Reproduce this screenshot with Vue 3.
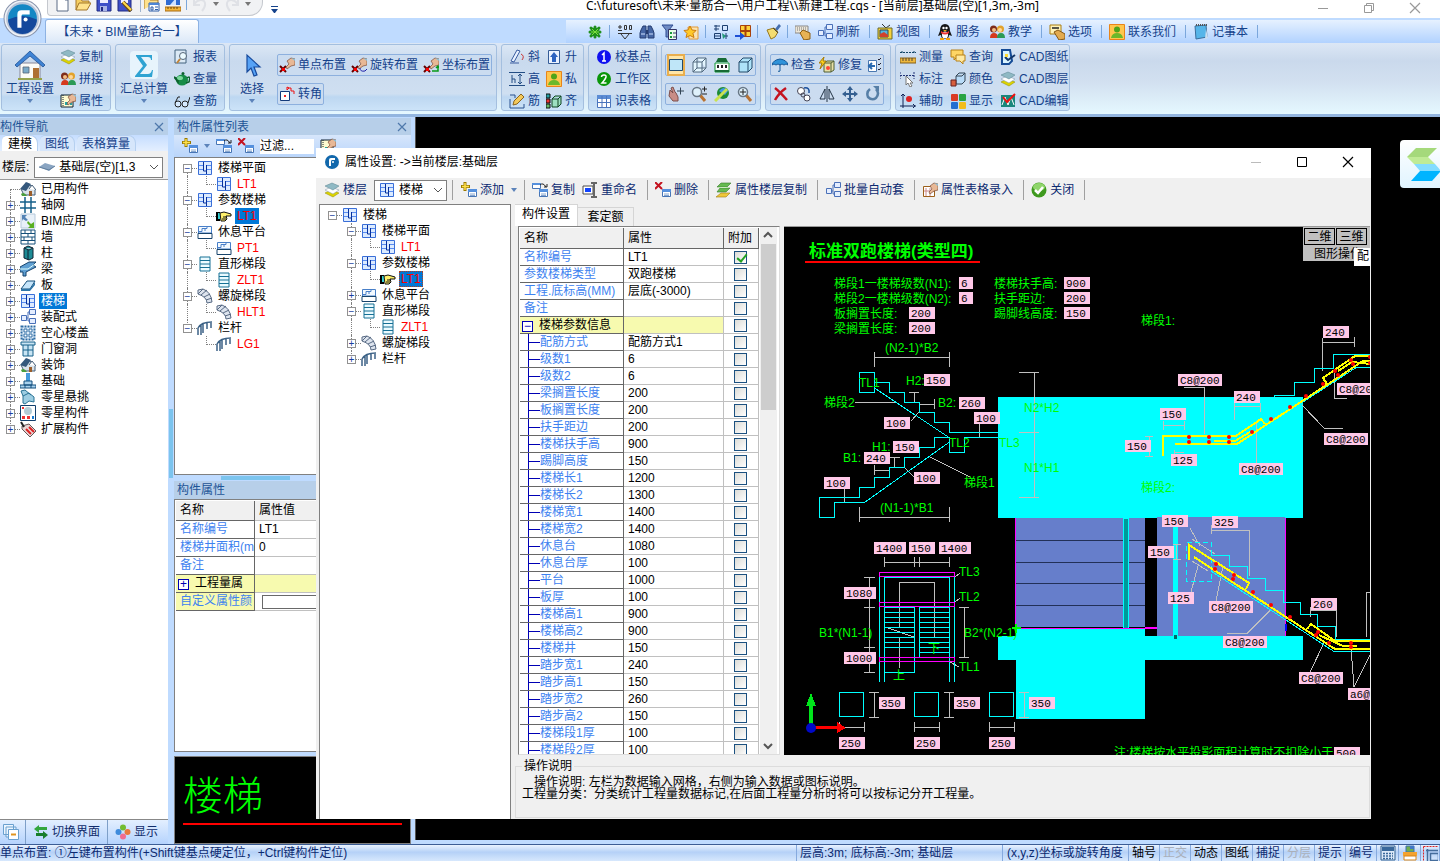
<template>
  <div class="app">
    <header class="titlebar">
      <div class="quick">
        <button v-for="q in quickIcons" :key="q" class="bare" :class="{ split: q === 'folderTable' }" :aria-label="q"><Icon :name="q" /></button>
        <i class="divider"></i>
        <button class="bare" aria-label="撤销"><Icon name="undo" /></button>
        <i class="caret grey"></i>
        <button class="bare" aria-label="恢复"><Icon name="redo" /></button>
        <i class="caret grey"></i>
      </div>
      <i class="more"></i>
      <h1>C:\futuresoft\未来·量筋合一\用户工程\\新建工程.cqs - [当前层]基础层(空)[1,3m,-3m]</h1>
      <div class="window-buttons">
        <button class="bare" aria-label="最小化"><Icon name="winMin" /></button>
        <button class="bare" aria-label="还原"><Icon name="winRestore" /></button>
        <button class="bare" aria-label="关闭"><Icon name="winClose" /></button>
      </div>
    </header>
    <button class="bare orb" aria-label="菜单">
      <svg viewBox="0 0 38 38"><circle cx="19" cy="19" r="18" fill="#eef1f6" stroke="#8793ac" /><circle cx="19" cy="19" r="15" fill="#1587c4" stroke="#b7c3d8" stroke-width="2" /><path d="M5 20a14 14 0 0 0 28 0q-14-7-28 0" fill="#14489c" /><path d="M14 28V15q0-4 4-4h8v4h-7q-1 0-1 2v11z" fill="#fff" /><circle cx="22" cy="20" r="2" fill="#fff" /></svg>
    </button>

    <div class="tabrow">
      <button class="bare ribbon-tab">【未来・BIM量筋合一】</button>
      <nav class="tools">
        <template v-for="(t, i) in topTools" :key="i">
          <i v-if="t === '|'" class="divider"></i>
          <button v-else class="bare tool" :class="{ labelled: t[1] }" :aria-label="t[0]"><Icon :name="t[0]" /><span v-if="t[1]">{{ t[1] }}</span></button>
        </template>
      </nav>
    </div>

    <section class="ribbon">
      <div class="group g-project">
        <button class="bare big"><Icon name="house" class="large" /><span>工程设置</span><i class="caret"></i></button>
        <div class="column"><button v-for="b in projectTools" :key="b[1]" class="bare tool"><Icon :name="b[0]" />{{ b[1] }}</button></div>
      </div>
      <div class="group g-project">
        <button class="bare big"><Icon name="sigma" class="large" /><span>汇总计算</span><i class="caret"></i></button>
        <div class="column"><button v-for="b in sumTools" :key="b[1]" class="bare tool"><Icon :name="b[0]" />{{ b[1] }}</button></div>
      </div>
      <div class="group g-place">
        <button class="bare big"><Icon name="cursor" class="large" /><span>选择</span><i class="caret"></i></button>
        <div class="boxes">
          <div class="box"><button v-for="b in placeTools" :key="b[1]" class="bare tool"><Icon :name="b[0]" />{{ b[1] }}</button></div>
          <div class="box"><button class="bare tool"><Icon name="corner" />转角</button></div>
        </div>
      </div>
      <div class="group g-edit">
        <div v-for="(c, i) in editTools" :key="i" class="column"><button v-for="b in c" :key="b[1]" class="bare tool"><Icon :name="b[0]" />{{ b[1] }}</button></div>
      </div>
      <div class="group g-base">
        <div class="column"><button v-for="b in baseTools" :key="b[1]" class="bare tool"><Icon :name="b[0]" />{{ b[1] }}</button></div>
      </div>
      <div class="group g-view">
        <div class="boxes">
          <div class="box wide"><button v-for="b in viewTools" :key="b" class="bare tool" :class="{ on: b === 'square' }" :aria-label="b"><Icon :name="b" /></button></div>
          <div class="box wide"><button v-for="b in zoomTools" :key="b" class="bare tool" :aria-label="b"><Icon :name="b" /></button></div>
        </div>
      </div>
      <div class="group g-check">
        <div class="boxes">
          <div class="box narrow">
            <button class="bare tool"><Icon name="umbrella" />检查</button>
            <button class="bare tool"><Icon name="repair" />修复</button>
            <button class="bare tool" aria-label="列表"><Icon name="list" /></button>
          </div>
          <div class="box wide"><button v-for="b in modifyTools" :key="b" class="bare tool" :aria-label="b"><Icon :name="b" /></button></div>
        </div>
      </div>
      <div class="group g-cad">
        <div v-for="(c, i) in cadTools" :key="i" class="column"><button v-for="b in c" :key="b[1]" class="bare tool"><Icon :name="b[0]" />{{ b[1] }}</button></div>
      </div>
    </section>

    <main class="workspace">
      <aside class="nav-panel">
        <div class="panel-title">构件导航<button class="bare" aria-label="关闭"><Icon name="x" /></button></div>
        <div class="panel-tabs">
          <button v-for="(t, i) in ['建模', '图纸', '表格算量']" :key="t" class="bare" :class="{ active: i === 0 }">{{ t }}</button>
        </div>
        <div class="floor">
          <label for="floor">楼层:</label>
          <span class="combo"><Icon name="slab" /><select id="floor"><option>基础层(空)[1,3</option></select><Icon name="chevron" /></span>
        </div>
        <ul class="tree nav-tree">
          <li v-for="(n, i) in navTree" :key="n[1]">
            <span class="cell" :class="{ first: i === 0, last: i === navTree.length - 1 }"><button v-if="i" class="expander">+</button></span>
            <Icon :name="n[0]" /><span class="label" :class="{ selected: n[1] === '楼梯' }">{{ n[1] }}</span>
          </li>
        </ul>
        <div class="nav-foot">
          <button class="bare tool" aria-label="折叠"><Icon name="pages" /></button>
          <button class="bare tool"><Icon name="swap" />切换界面</button>
          <button class="bare tool"><Icon name="petals" />显示</button>
        </div>
      </aside>
      <div class="splitter"><i></i></div>
      <aside class="prop-panel">
        <div class="panel-title">构件属性列表<button class="bare" aria-label="关闭"><Icon name="x" /></button></div>
        <div class="prop-tools">
          <button class="bare tool" aria-label="添加"><Icon name="add" /></button><i class="caret"></i>
          <button class="bare tool" aria-label="复制"><Icon name="copy" /></button>
          <button class="bare tool" aria-label="删除"><Icon name="remove" /></button>
          <input type="text" value="过滤..." aria-label="过滤" />
          <button class="bare tool" aria-label="设置"><Icon name="props" /></button>
        </div>
        <ul class="tree list-tree">
          <li v-for="(n, i) in listTree" :key="i">
            <span v-for="(c, j) in n.cells" :key="j" class="cell" :class="c"><button v-if="c.includes('exp')" class="expander">−</button></span>
            <Icon :name="n.icon" /><span class="label" :class="{ leaf: n.leaf, selected: n.on }">{{ n.text }}</span>
          </li>
        </ul>
        <div class="h-splitter"><i></i></div>
        <div class="panel-title sub">构件属性</div>
        <div class="small-grid">
          <table>
            <thead><tr><th>名称</th><th>属性值</th></tr></thead>
            <tbody>
              <tr><td>名称编号</td><td>LT1</td></tr>
              <tr><td>楼梯井面积(m</td><td>0</td></tr>
              <tr><td>备注</td><td></td></tr>
              <tr class="section"><td><button class="toggle">+</button>工程量属</td><td></td></tr>
              <tr class="own"><td>自定义属性颜</td><td><input type="text" aria-label="自定义属性颜色" /></td></tr>
            </tbody>
          </table>
        </div>
        <div class="preview"><span>楼梯</span><i></i></div>
      </aside>
      <div class="viewport"></div>
    </main>

    <footer class="status">
      <span class="hint">单点布置: ①左键布置构件(+Shift键基点硬定位，+Ctrl键构件定位)</span>
      <span class="level">层高:3m; 底标高:-3m; 基础层</span>
      <span class="coords">(x,y,z)坐标或旋转角度</span>
      <button v-for="s in switches" :key="s" class="bare" :class="{ dark: ['轴号', '动态', '图纸'].includes(s), off: ['正交', '分层'].includes(s) }">{{ s }}</button>
      <button v-for="s in ['calculator', 'printer', 'selection']" :key="s" class="bare pic" :aria-label="s"><Icon :name="s" /></button>
    </footer>

    <a href="#" class="float-logo" aria-label="助手">
      <svg viewBox="0 0 40 48"><path d="M16 8h21l-9 9H7z" fill="#a5d97b" /><path d="M7 17h21l7 7H14z" fill="#bfeb95" /><path d="M14 24h21l6 7H20z" fill="#82dcff" /><path d="M20 31h21l-9 10H11z" fill="#00b4ff" /></svg>
    </a>

    <section class="dialog">
      <div class="dialog-title">
        <svg class="dialog-logo" viewBox="0 0 16 16"><circle cx="8" cy="8" r="7" fill="#1268ac" /><path d="M5 12V6q0-2 2-2h4v2H8q-1 0-1 2v4z" fill="#fff" /><circle cx="9" cy="8" r="1" fill="#fff" /></svg>
        <h2>属性设置: -&gt;当前楼层:基础层</h2>
        <button class="bare faint" aria-label="最小化"><Icon name="winMin" /></button>
        <button class="bare" aria-label="最大化"><Icon name="winMax" /></button>
        <button class="bare" aria-label="关闭"><Icon name="winClose" /></button>
      </div>
      <div class="dialog-tools">
        <button class="bare tool"><Icon name="layers" />楼层</button>
        <span class="combo"><Icon name="stair" /><select aria-label="构件"><option>楼梯</option></select><Icon name="chevron" /></span>
        <i class="divider"></i>
        <button class="bare tool"><Icon name="add" />添加</button><i class="caret"></i>
        <i class="divider"></i>
        <button class="bare tool"><Icon name="copy" />复制</button>
        <button class="bare tool"><Icon name="rename" />重命名</button>
        <i class="divider"></i>
        <template v-for="b in dialogTools" :key="b[1]"><button class="bare tool"><Icon :name="b[0]" />{{ b[1] }}</button><i class="divider"></i></template>
      </div>
      <div class="dialog-body">
        <ul class="tree dialog-tree">
          <li v-for="(n, i) in dialogTree" :key="i">
            <span v-for="(c, j) in n.cells" :key="j" class="cell" :class="c"><button v-if="c.includes('exp')" class="expander">{{ n.closed ? '+' : '−' }}</button></span>
            <Icon :name="n.icon" /><span class="label" :class="{ leaf: n.leaf, selected: n.on, focus: n.on }">{{ n.text }}</span>
          </li>
        </ul>
        <div class="editor">
          <div class="editor-tabs"><button class="active">构件设置</button><button>套定额</button></div>
          <div class="editor-main">
            <div class="grid-wrap">
              <div class="grid-clip">
                <table class="grid">
                  <thead><tr><th>名称</th><th>属性</th><th>附加</th></tr></thead>
                  <tbody>
                    <tr v-for="(r, i) in rows" :key="r[0]" :class="{ section: i === 4, child: i > 4 }">
                      <td><button v-if="i === 4" class="toggle">−</button>{{ r[0] }}</td>
                      <td>{{ r[1] }}</td>
                      <td><input type="checkbox" :checked="i === 0" :aria-label="r[0]" /></td>
                    </tr>
                  </tbody>
                </table>
              </div>
              <div class="scrollbar"><Icon name="up" /><i></i><Icon name="down" /></div>
            </div>
            <div class="drawing">
              <svg class="sheet" width="100%" height="100%">
                <g transform="translate(0 -2)">
                  <!-- model faces behind the sections -->
                  <path fill="#0ff" d="M214 172h305v121H214zM214 411h305v24H361v59H232v-59h-18zM232 403h129v9H232z" />
                  <path fill="#667ecb" d="M232 293h129v109H232zM373 292h128v119H373z" />
                  <path stroke="#223058" d="M232 315.5h129M232 337.5h129M232 358.5h129M232 380.5h129" />
                  <path fill="#0ff" d="M339 293h6v111h-6zM389 302h5v109h-5z" />
                  <path fill="#099" d="M340 294h4v110h-4z" />
                  <path fill="#066" d="M390 410h3v4h-3z" />
                  <path class="magenta" d="M231.5 293v110M231 403.5h142M501.5 293v118" />
                  <path class="magenta" d="M361 402.5h12" />
                  <path fill="#00f" d="M501 399h2v7h-2z" />
                  <path fill="none" stroke="#0f0" stroke-width="2" d="M232 399v9M228 403h9" />
                  <path stroke="red" stroke-width="2" d="M21 37h175" />

                  <path class="grey" d="M90.5 132.5h75M90.5 127v15M165.5 127v15M71 177.5h40M125 167.5h10M130.5 167v10M136 179.5h15M150.5 174v10M127 196l8-9M195.5 198v14M90.5 240v10M90 245.5h15M106 232.5h10M110.5 232v10M120 242l10 10M146 232l40 20M60.5 262v15M75.5 292.5h90M75.5 282v15M165.5 282v15M250.5 147v125M235 147.5h20M235 207.5h20M235 272.5h20" />
                  <path class="cyan" d="M75.5 147.5h15v20h-15zM90.5 157.5h15v10h15v10h15v10h15v10h15v10h48M90.5 163L165 212.5M35.5 292.5v-20h40v-10h15v-10h15v-10h15v-10h15v-10h15v-10h15M35.5 292.5h15v-15h30L165.5 217M165.5 212v15h15v-15h33" />

                  <path class="grey" d="M100.5 337.5h65M100.5 332v10M130.5 332v10M135.5 332v10M165.5 332v10M115.5 402v-45h35v55M115.5 413v30M101 402l29 10M85.5 352v95M80 352.5h11M80 382.5h11M80 422.5h11M80 447.5h11M180.5 382v50M175 382.5h10M175 432.5h10M171 352l5-4M171 377l5-4M166 437l9 5" />
                  <path class="cyan" d="M95.5 347v110M100.5 352v105M165.5 352v105M170.5 347v110M100 352.5h65M130.5 382v65h-30M135.5 382v50" />
                  <path class="cyan" d="M101 382.5h30M101 387.5h30M101 392.5h30M101 397.5h30M101 402.5h30M101 407.5h30M101 412.5h30M101 417.5h30M101 422.5h30M136 382.5h30M136 387.5h30M136 392.5h30M136 397.5h30M136 402.5h30M136 407.5h30M136 412.5h30M136 417.5h30M136 422.5h30M136 427.5h30" />
                  <path class="magenta" d="M95.5 347.5h75v4h-75zM95.5 377.5h75v4h-75zM95.5 432.5h75v4h-75z" />
                  <g v-for="x in [0, 75, 150]" :key="x" :transform="`translate(${x} 0)`">
                    <path class="cyan" d="M55.5 467.5h24v24h-24z" />
                    <path class="grey" d="M90.5 467v25M85 467.5h10M85 492.5h10M55.5 502.5h25M55.5 497v10M80.5 497v10" />
                  </g>
                  <path fill="#00e51b" d="M25 503v-22h-3l5-13 5 13h-3v22z" />
                  <path fill="red" d="M27 501h26v-4l9 6-9 5v-4H27z" />
                  <circle cx="27" cy="503" r="5" fill="#0008c8" />

                  <path class="grey" d="M538.5 113v33M538.5 117.5h32M570.5 112v10M400 162.5h20.5v46M450 181.5h27M450.5 178v17M476.5 178v9M379.5 200.5h21M379.5 196v9M400.5 196v9M365.5 211v20M361 211.5h8M361 231.5h8M390.5 225v6M390 227.5h10M472.5 197v41M550.5 148v25h12M518 180l22 23h19" />
                  <path class="cyan" d="M490.5 172v-1.5h20v-13h20v-14h19v-14h38M519 177l54-35h14" />
                  <path class="rebar" d="M379 231v-20h73l25-17 4 5M391 219h62l126-83h8M430 216h21l15-9M543 159l-4-6 32-22h16M554 146l14-9 19 2" />
                  <circle v-for="(d, i) in dots" :key="i" :cx="d[0]" :cy="d[1]" r="2" fill="red" />

                  <path class="grey" d="M406 303l10 18M408 314l23 15M427.5 300v9M427 305.5h38v45M392.5 319v16M389 319.5h8M389 334.5h8M408 336l16 10M407 367l7-26M432 376l7-35M443 408.5h20l23-23M526.5 382v10M526 385.5h26M552.5 382v30M526 447l15-31M570 462l-3-39M570 462l17-34M582.5 412v-45h5" />
                  <path class="cyan" d="M427 330.5h18.500v11h18v12h18v12h18v12h17v12h17v12h18v13h35M427 346l123 80.500h37" />
                  <path class="cyan" stroke-dasharray="5 3" d="M402.500 317.500h25v39h-25z" />
                  <path class="rebar" d="M405 335v-15l60 38-3 6M410 332l141 92h36M523 404l4-5 24 17h36M535 410l24 11h14" />
                  <circle v-for="(d, i) in dots2" :key="i" :cx="d[0]" :cy="d[1]" r="2" fill="red" />

                  <text class="heading" x="25" y="32">标准双跑楼梯(类型四)</text>
                  <text v-for="(t, i) in notes" :key="i" class="note" :x="t[0]" :y="t[1]">{{ t[2] }}</text>
                  <g v-for="(p, i) in sizes" :key="i">
                    <rect :x="p[0]" :y="p[1]" :width="p[2].length > 4 ? 44 : p[2].length * 6 + 8" height="12" fill="#ffc8e8" />
                    <text class="size" :x="p[0] + 2" :y="p[1] + 10">{{ p[2] }}</text>
                  </g>
                </g>
              </svg>
              <div class="view-switch"><button>二维</button><button>三维</button><span>图形操作</span></div>
              <div class="popup">配</div>
            </div>
          </div>
          <fieldset>
            <legend>操作说明</legend>
            <p>　操作说明: 左栏为数据输入网格，右侧为输入数据或图标说明。</p>
            <p>工程量分类：分类统计工程量数据标记,在后面工程量分析时将可以按标记分开工程量。</p>
          </fieldset>
        </div>
      </div>
    </section>
  </div>
</template>

<script setup>
import { h } from 'vue';

const hand = '<path d="M8 4l4-3 4 1v6l-4 1-4 3-1-2 3-3z" fill="#e8b896" stroke="#7b4a35" stroke-width=".7"/><path d="M12 1l4 1v2z" fill="#8ac0d8"/>';
const redX = '<path d="M1 9l6 6M7 9l-6 6" stroke="#600" stroke-width="2"/><path d="M3 11h3v3H3z" fill="red"/>';
const miniTable = '<path d="M7.500 7.500h8v7h-8z" fill="#fff" stroke="#4775b5"/><path d="M7 7h9v3H7z" fill="#5590dd"/><path d="M9 12h5M9 13.500h5" stroke="#88a7d0"/>';
const sheets = '<path d="M1 11l6-3 8 3-6 4z" fill="#ddd400" stroke="#8f8b00" stroke-width=".5"/><path d="M1 8l6-3 8 3-6 4z" fill="#fff" stroke="#7d93a8" stroke-width=".5"/><path d="M1 4l7-3 7 3-6 4z" fill="#8fb9c4" stroke="#56808d" stroke-width=".5"/>';
const magnifier = '<path d="M9 9l5 6" stroke="#b87333" stroke-width="3"/><circle cx="6" cy="6" r="4.500" fill="#dff1fb" stroke="#687786" stroke-width="1.500"/>';
const people = '<circle cx="4.500" cy="5" r="3.500" fill="#7e2c1b"/><path d="M1 14q0-5 4-5t4 5z" fill="#d63a1e"/><circle cx="5" cy="6" r="2" fill="#f4bd83"/><circle cx="11.500" cy="5" r="3.500" fill="#e2a22c"/><path d="M8 14q0-5 4-5t4 5z" fill="#2b9a56"/><circle cx="11" cy="6" r="2" fill="#ffd79a"/>';
const stair = '<path d="M1.500 1.500h13v13h-13z" fill="#dcebff" stroke="#3a6fd8"/><path d="M2 5.500h4M2 9.500h4M10 5.500h4M10 9.500h4" stroke="#5b8df0"/><path d="M6.500 2v9h3V5M9.500 5v9" stroke="#06309c" fill="none"/>';
const home = '<path d="M1 8l6-6 8 6v6H4z" fill="#d9e2ea" stroke="#445e78"/><path d="M0 8l6-7 5 2-5 7z" fill="#34587c"/><path d="M9 8l3-4 4 5" fill="#fff" stroke="#445e78"/><path d="M9 10h3v5H9z" fill="#9a5d2a"/><path d="M1 13q3-3 6 2H2z" fill="#4a9e3d"/>';
const contact = '<path d="M.500.500h15v15H.500z" fill="#ffc64d" stroke="#e8841a"/><circle cx="8" cy="5.500" r="3" fill="#4fa419"/><path d="M2 14q1-5 6-5t6 5z" fill="#6cb82a"/>';
const cube = '<path d="M2 5l4-4h9v10l-4 4H2z" fill="#aee2f8" stroke="#234a6a"/><path d="M2 5h9l4-4M11 5v10" stroke="#234a6a" fill="none"/>';
const arrowCursor = '<path d="M6 5l7 7h-3l2 3-2 1-2-4-2 2z" fill="#fff" stroke="#777"/>';

const icons = {
  newFile: '<path d="M3 1h8l3 3v11H3z" fill="#fff" stroke="#5a6b85"/><path d="M11 1v3h3" fill="#cfdced" stroke="#5a6b85"/>',
  open: '<path d="M1 14V3h5l1 2h7v3" fill="#f6cf62" stroke="#a3762a"/><path d="M1 14l3-7h12l-4 7z" fill="#ffe28c" stroke="#a3762a"/><path d="M9 1q4-1 5 3" fill="none" stroke="#3b75b4"/>',
  save: '<path d="M1 1h13l1 1v13H1z" fill="#3e50c8" stroke="#202a82"/><path d="M4 1h8v6H4z" fill="#eef"/><path d="M4 10h7v5H4z" fill="#aab4e6"/><path d="M5 11h2v4H5z" fill="#202a82"/>',
  saveEdit: '<path d="M1 1h12l1 1v13H1z" fill="#3e50c8" stroke="#202a82"/><path d="M4 1h7v6H4z" fill="#eef"/><path d="M6 6l8 9" stroke="#6b4b14" stroke-width="4"/><path d="M6 6l8 8" stroke="#ffd84d" stroke-width="2"/>',
  folderTable: '<path d="M0 13V2h5l1 2h8v3" fill="#ffe28c" stroke="#a3762a"/><path d="M5 7h10v8H5z" fill="#fff" stroke="#2c5da8"/><path d="M5 7h10v2H5z" fill="#4d86d6"/><path d="M7 11h2v3H7zM11 11h3M11 13.500h3" stroke="#2c5da8" fill="none"/>',
  ruler: '<path d="M1 1h14v8H1z" fill="#2f6bd2"/><path d="M5 9l6-7v7z" fill="#cfe2ff"/><path d="M0 11h16v4H0z" fill="#f3b63a" stroke="#a86a10"/><path d="M3 11v2M6 11v2M9 11v2M12 11v2" stroke="#704608"/>',
  undo: '<path d="M2 3v6h6M2 8q5-6 10-3 3 4-2 10" fill="none" stroke="#dfe1e6" stroke-width="2"/>',
  redo: '<path d="M14 3v6H8M14 8Q9 2 4 5q-3 4 2 10" fill="none" stroke="#dfe1e6" stroke-width="2"/>',
  winMin: '<path d="M3 8.500h10" stroke="currentColor"/>',
  winRestore: '<path d="M3.500 5.500h7v7h-7zM5.500 5V3.500h7v7H11" fill="none" stroke="currentColor"/>',
  winMax: '<path d="M3.500 3.500h9v9h-9z" fill="none" stroke="currentColor"/>',
  winClose: '<path d="M3 3l10 10M13 3L3 13" fill="none" stroke="currentColor" stroke-width="1.200"/>',
  x: '<path d="M4 4l8 8M12 4l-8 8" stroke="#4f78ab" stroke-width="1.200"/>',
  chevron: '<path d="M4 6l4 4 4-4" fill="none" stroke="#555"/>',
  up: '<path d="M4 10l4-4 4 4" fill="none" stroke="#555" stroke-width="2"/>',
  down: '<path d="M4 6l4 4 4-4" fill="none" stroke="#555" stroke-width="2"/>',
  clover: '<path d="M4 4l8 8M12 4l-8 8M8 3v10M3 8h10" stroke="#1f8f1c" stroke-width="3" stroke-linecap="round"/><path d="M5 5l6 6M11 5l-6 6M4 8h8" stroke="#7ee040"/>',
  level: '<path d="M1 3h4M3 1v4M1 6.500h4M7.500 1.500h2v4h-2zM12.500 1.500h2v4h-2zM1 9.500h14M4 10l4 5 4-5" fill="none" stroke="#333"/>',
  binoculars: '<path d="M2 6l2-4h3v12H1V9zM9 2h3l2 4 1 3v5H9z" fill="#4566a5" stroke="#263d70"/><path d="M7 6h2v4H7z" fill="#263d70"/><path d="M2 10h4M10 10h4" stroke="#cfe0ff"/>',
  filter: '<path d="M1 1h11L8 6v7H5V6z" fill="#6f8bc4" stroke="#2d4b91"/><path d="M7.500 5.500h8v10h-8z" fill="#e8ffe8" stroke="#336"/><path d="M9 8h2v2H9zM9 12h2v2H9z" fill="#1a9a3a"/><path d="M12 9h3M12 13h3" stroke="#336"/>',
  star: '<path d="M5 3h10v12H6z" fill="#fbe3b0" stroke="#e09a3a"/><path d="M7 2l2 4 4 .500-3 3 1 4-4-2-4 2 1-4-3-3 4-.500z" fill="#ffc928" stroke="#cc7b0d"/>',
  windows: '<path d="M1 2h6M1 5h5M3 1v6M9.500 1.500h5v5h-5zM1.500 9.500h6v5h-6zM1 12h6M10 12h5M13 9v6" stroke="#1c3f70" fill="none"/><path d="M9 9l4 3-3 3z" fill="#297"/>',
  grid4: '<path d="M5.500 1.500h10v11h-10z" fill="#ffd33b" stroke="#a8420c"/><path d="M10.500 1v12M5 7h10" stroke="#a8420c" stroke-width="2"/><path d="M0 11h5V8l5 4-5 4v-3H0z" fill="#1d4fd6"/>',
  brush: '<path d="M10 5l4-5 2 2-4 5z" fill="#466fae"/><path d="M2 6l7-2 4 4-3 5-4 2z" fill="#f4dc71" stroke="#99781c"/><path d="M8 4l5 5" stroke="#444"/>',
  keyboard: '<path d="M0 2h13v7H0z" fill="#ece6d8" stroke="#888"/><path d="M2 4h9M2 6h9" stroke="#777" stroke-dasharray="1 1"/><path d="M5 9l3-3 7 3v6l-6 1z" fill="#e8b254" stroke="#8e5e12"/>',
  net: '<path d="M1.500 6.500h5v5h-5z" fill="#e5eeff" stroke="#4a70b8"/><path d="M9.500.500h6v5h-6zM9.500 9.500h6v5h-6z" fill="#e5eeff" stroke="#4a70b8"/><path d="M6 9h2V3h1M8 9v3h1" stroke="#4a70b8" fill="none"/>',
  tv: '<path d="M5 0l4 4 4-3" stroke="#333" fill="none"/><path d="M1 4h14v11H1z" fill="#f5d23c" stroke="#6a6a2a"/><path d="M3 6h8v7H3z" fill="#55b5dd" stroke="#345"/><path d="M3 10l4-2 4 3v2H3z" fill="#d0402b"/>',
  penguin: '<path d="M3 7q0-7 5-7t5 7l2 5-3-1q0 4-4 4t-4-4l-3 1z" fill="#181818"/><ellipse cx="8" cy="11" rx="3" ry="3.500" fill="#fff"/><path d="M4 7q4 3 8 0v2q-4 3-8 0z" fill="#e33"/><circle cx="6.500" cy="4" r="1.200" fill="#fff"/><circle cx="9.500" cy="4" r="1.200" fill="#fff"/><path d="M6 6h4l-2 1.500z" fill="#f9b20d"/><path d="M3 14h4v2H3zM9 14h4v2H9z" fill="#f5a30b"/>',
  people,
  option: '<path d="M1 1h11v9H1z" fill="#fff3b8" stroke="#a97d11"/><path d="M3 4h7" stroke="#222" stroke-width="1.500"/><path d="M5 8l4-2 7 4v5l-6 1z" fill="#e3ab50" stroke="#845512"/>',
  contact,
  notebook: '<path d="M2 2l11-1 1 12-11 2z" fill="#56b5e9" stroke="#3a6e9c"/><path d="M3 1h11" stroke="#555" stroke-dasharray="1 1" stroke-width="2"/><path d="M13 5l2 9-3 1" fill="#cde"/>',
  house: '<path d="M3 7h10v8H3z" fill="#fbfbf6" stroke="#889" stroke-width=".5"/><path d="M8 1L.500 8l1 1L8 3.500 14.500 9l1-1z" fill="#3f83d4" stroke="#1f5193" stroke-width=".4"/><path d="M9.500 9.500h3V15h-3z" fill="#ae7033"/><path d="M4.500 9h3v3h-3z" fill="#7aaac8" stroke="#567" stroke-width=".4"/><path d="M2 15h12" stroke="#96a34c"/>',
  sigma: '<rect x="1" y="1" width="14" height="14" rx="2" fill="#e7f4fc"/><path d="M4 3h8v2.500h-.5Q11.500 4 10 4H6.500L9.500 8 6 12.500h4q1.500 0 2-2h.500L12 14H3.500v-.5L7.500 8.500 4 3.500z" fill="#2fa3d2"/>',
  cursor: '<path d="M5.500 3v8.500l2-2 1.500 4 1.500-.500-1.500-4h3z" fill="#56a2f6" stroke="#174a9c" stroke-width=".6"/>',
  layers: sheets,
  props: '<path d="M1 2h12v12H1z" fill="#fffbd0" stroke="#123"/><path d="M3 2v12" stroke="#123" stroke-dasharray="1 1"/><path d="M5 9h3v3H5zM10 10h2v2h-2z" fill="#26a4a4"/>' + hand,
  report: '<path d="M1 1h11v13H1z" fill="#dbe9f5" stroke="#43627e"/><circle cx="9" cy="7" r="3.500" fill="#ecfbff" stroke="#567"/><path d="M6 10l-3 4" stroke="#c28338" stroke-width="2"/>',
  teapot: '<ellipse cx="8" cy="9" rx="6" ry="5.500" fill="#168c47"/><path d="M0 6l4 2v3zM13 7q4-3 2 4l-3 1" fill="none" stroke="#0c602e" stroke-width="1.500"/><circle cx="9" cy="2.500" r="1.500" fill="#0c602e"/><ellipse cx="6" cy="7" rx="3" ry="2" fill="#7bd99b"/>',
  glasses: '<circle cx="4" cy="11" r="3" fill="#d7ebff" stroke="#222"/><circle cx="11" cy="11" r="3" fill="#d7ebff" stroke="#222"/><path d="M1 10l3-6h2M14 10l2-6" stroke="#222" fill="none"/>',
  placePoint: redX + hand,
  placeRotate: redX + hand + '<path d="M9 11q0 4 5 3l2-2" fill="none" stroke="#22a"/>',
  placeCoord: redX + hand + '<path d="M9 14h6v-4M13 11l2-2 1 2" fill="none" stroke="#0a9a1a" stroke-width="1.500"/>',
  corner: '<path d="M1.500 5.500h9v9h-9z" fill="#fff" stroke="#123a7a"/><path d="M5 9h2v2H5z" fill="#e22"/><path d="M8 1v3l2-2zM9 2h3v3h3v3" stroke="#e11" fill="none"/>',
  slope: '<path d="M1 14h9M2 12L8 1l3 1-6 11z" fill="#e8f1ff" stroke="#3a5da0"/><path d="M12 5q4 2 1 6" stroke="#c33" fill="none"/>',
  heightTool: '<path d="M0 1.500h16M0 14.500h16M3 4v8M3 8h3v4M11 3v10M9 5l2-2 2 2M9 11l2 2 2-2" stroke="#234d84" fill="none"/>',
  pencil: '<path d="M1 6v9h14v-4M1 2h5v3" fill="none" stroke="#28518e"/><path d="M4 12l1-4 7-7 3 3-7 7z" fill="#f4c95b" stroke="#8b641d"/>',
  raise: '<path d="M2.500 1.500h11v13h-11z" fill="#eaf2ff" stroke="#345c98"/><path d="M8 3l4 5h-2v5H6V8H4z" fill="#2b62c0"/>',
  align: '<path d="M0 1h4v4H0z" fill="#24a0a4" stroke="#111"/><path d="M0 6h4v4H0z" fill="#e33" stroke="#111"/><path d="M0 11h4v4H0z" fill="#6b6" stroke="#111"/><path d="M6 6l3-3h6v8l-3 3H6zM6 6h6l3-3M12 6v8" fill="#9de0c0" stroke="#142"/>',
  one: '<circle cx="8" cy="8" r="7" fill="#1010f0"/><path d="M6 6l2-2v8M6 12h4" stroke="#fff" stroke-width="1.500" fill="none"/>',
  two: '<circle cx="8" cy="8" r="7" fill="#0a960a"/><path d="M5.500 6q0-2 2.500-2t2 2-4 6h4.500" stroke="#fff" stroke-width="1.500" fill="none"/>',
  tableIcon: '<path d="M1.500 2.500h13v12h-13z" fill="#fff" stroke="#4a75bd"/><path d="M1 2h14v4H1z" fill="#5c8cd4"/><path d="M1 9.500h14M6 3v12M10.500 3v12" stroke="#4a75bd"/>',
  square: '<path d="M1.500 2.500h13v11h-13z" fill="#bfe6f8" stroke="#234a6a"/>',
  wireCube: '<path d="M2 5l4-4h9v10l-4 4H2zM2 5h9v10M11 5l4-4M6 1v10h9M6 11l-4 4" fill="#e4f6ff" stroke="#51687e"/>',
  building: '<path d="M1 6h14v9H1z" fill="#fff" stroke="#193"/><path d="M2 5l2-4h8l2 4z" fill="#176b35"/><path d="M4 8v3M8 8v3M12 8v3" stroke="#222" stroke-width="2"/><path d="M1 13h14v2H1z" fill="#176b35"/>',
  cube,
  pan: '<path d="M2 4l3 3-2-5 2-1 2 5 1 1 2 4v4H5l-4-5z" fill="#c98d86" stroke="#7c4f4c"/><path d="M9 5h7M12.500 1.500v7" stroke="#345"/>',
  zoomIn: magnifier + '<path d="M11 3h5M13.500.500v5M11 8h5" stroke="#222"/>',
  orbit: '<circle cx="9" cy="7" r="6" fill="#1e8c34"/><path d="M5 5q5-6 9 0l-3 4z" fill="#3f98e8"/><path d="M1 15L13 3" stroke="#c9e24f" stroke-width="3"/>',
  zoomFit: magnifier + '<path d="M3 6h6M6 3v6" stroke="#222"/>',
  umbrella: '<path d="M0 8q1-5 8-6 7 1 8 6-2-2-4 0-2-2-4 0-2-2-4 0-2-2-4 0" fill="#2f93da" stroke="#15599a"/><path d="M8 7v7q-1 1-2 0" fill="none" stroke="#15599a"/>',
  repair: '<path d="M5 6l3-2h7v9l-3 2H5z" fill="#e9e0a6" stroke="#4f5f34"/><path d="M5 6h7l3-2M12 6v9" fill="none" stroke="#4f5f34"/><path d="M5 0L0 6h3l-2 6 6-8H4z" fill="#ffd21d" stroke="#a57c09"/><circle cx="9" cy="11" r="2" fill="#f43"/>',
  list: '<path d="M2.500 3.500h8v11h-8z" fill="#fff" stroke="#4a78b0"/><path d="M3 9h6M6 6L3 9l3 3" fill="none" stroke="#2869b0" stroke-width="2"/><path d="M12 2l1 1 2-2M12 7l1 1 2-2M12 12l1 1 2-2" stroke="#223" fill="none"/>',
  cross: '<path d="M2 2q4 3 12 12M13 2Q6 7 2 14" stroke="#c4121f" stroke-width="2.500" fill="none"/>',
  copyRing: '<circle cx="5" cy="5" r="3.500" fill="#fff" stroke="#445"/><circle cx="11" cy="12" r="3" fill="#fff" stroke="#445"/><path d="M8 2q6-1 5 5" fill="none" stroke="#1a4f9c" stroke-width="1.500"/><circle cx="7" cy="9" r="2" fill="none" stroke="#445"/>',
  mirror: '<path d="M8 0v16M6 3v10H1zM10 3v10h5z" fill="none" stroke="#234"/>',
  move: '<path d="M8 0l3 4H9v3h3V5l4 3-4 3V9H9v3h2l-3 4-3-4h2V9H4v2L0 8l4-3v2h3V4H5z" fill="#345f91"/>',
  rotate: '<path d="M5 3q-4 3-2 8 4 4 8 1 4-5 0-9" fill="none" stroke="#577fa6" stroke-width="2.500"/><path d="M8 0h6v6z" fill="#577fa6"/>',
  measure: '<path d="M0 3.500h16M2 2v3M14 2v3" stroke="#146" stroke-dasharray="2 1"/><path d="M0 9h16v5H0z" fill="#eeb83c" stroke="#85601a"/><path d="M3 9v3M6 9v3M9 9v3M12 9v3" stroke="#543"/>',
  dimension: '<path d="M0 1v7M14 1v7M0 4.500h14" stroke="#237" stroke-dasharray="2 1"/>' + arrowCursor,
  axis: '<path d="M3 1v14M0 13h16M1 3l2-2 2 2M13 11l2 2-2 2" stroke="#125" fill="none"/><circle cx="9" cy="6" r="3" fill="#d22"/>',
  chat: '<path d="M1 1h12v7H7l-3 3V8H1z" fill="#ffd665" stroke="#b88117"/><path d="M6 6h9v6h-2v3l-3-3H6z" fill="#ffe9a0" stroke="#b88117"/>',
  colour: '<path d="M6 5l3-3h6v8l-3 3H6zM6 5h6l3-3" fill="#b9dbf8" stroke="#345"/><path d="M1 9h5v6H1z" fill="#d75d3c" stroke="#622"/>',
  blocks: '<rect width="7" height="7" x="1" y="1" rx="1" fill="#da3b25"/><rect width="7" height="7" x="9" y="1" rx="1" fill="#29a443"/><rect width="7" height="7" x="1" y="9" rx="1" fill="#246fd0"/><rect width="7" height="7" x="9" y="9" rx="1" fill="#f1bd1c"/>',
  cadPaper: '<path d="M2 1h8l2 11-3 3H2z" fill="#d8f4ff" stroke="#144b96" stroke-width="2"/><path d="M5 8l3 3 7-5" stroke="#14386a" stroke-width="2" fill="none"/><path d="M5 5h3v3H5z" fill="#ffdb37"/>',
  cadEdit: '<path d="M1 2h14v12H1z" fill="#19877d"/><path d="M2 12l3-8 3 8 3-8 3 8" stroke="#fff" fill="none"/><path d="M3 4l4 5 8-8" stroke="#e11" stroke-width="2" fill="none"/>',
  slab: '<path d="M0 8l6-4 10 3-6 5z" fill="#8aa5c2"/><path d="M0 8l10 3 6-4" stroke="#607e9e" fill="none"/>',
  home,
  axisNet: '<path d="M5 0v16M11 0v16M0 5h16M0 11h16" stroke="#16608a" stroke-width="1.500"/>',
  bim: '<path d="M1 1h14v14H1z" fill="#e8f0f8" stroke="#b6c9db"/><path d="M2 2h5L5 4l3 3-2 1-3-2-1 2z" fill="#5483b5"/><path d="M8 8l3 3 3-2v6H8l2-2-3-3z" fill="#59af20"/>',
  wall: '<path d="M1 1h14v14H1z" fill="#fff" stroke="#16507a"/><path d="M1 4.500h14M1 8h14M1 11.500h14M5 1v3M11 1v3M8 5v3M4 8v3M12 8v3M8 12v3" stroke="#16507a" fill="none"/>',
  column: '<path d="M4 3l4-2 5 2v10l-4 2-5-2z" fill="#1d8b95" stroke="#123"/><path d="M8 5v10M4 3l5 2 4-2" stroke="#123" fill="#93d2dc"/>',
  beam: '<path d="M0 6l9-5h7l-3 3 3 2-10 5v4H3v-4H0z" fill="#5f9fd2" stroke="#15436d"/><path d="M0 8h8l7-5" stroke="#dff" fill="none"/>',
  plate: '<path d="M1 12l6-8h8l-5 8z" fill="#c6e5fa" stroke="#16507a"/><path d="M1 12h9l5-7v3l-5 6H1z" fill="#2d75a8"/>',
  stair,
  hollow: '<path d="M1.500 1.500h13v13h-13z" fill="#dcebf8" stroke="#2e6da4" stroke-dasharray="2 1" stroke-width="2"/><path d="M4 4h3v3H4zM9 4h3v3H9zM4 9h3v3H4zM9 9h3v3H9z" fill="#fff" stroke="#2e6da4"/>',
  windowFrame: '<path d="M1 1h14v3H1zM3 4v11h10V4M8 4v11M3 9h10" fill="#c9e5f4" stroke="#16608a"/>',
  base: '<path d="M6 0h4v9H6z" fill="#459add"/><path d="M4 8h8v4H4zM0 12h16v3H0zM5 12v3M11 12v3" fill="#a9d2ee" stroke="#144e7c"/>',
  cantilever: '<path d="M3 14V7l6-3 5 4v5l-5-1-4 3zM3 7L1 2l4-1 6 5" fill="#9dcde2" stroke="#287294"/>',
  pixels: '<path d="M.500.500h15v15H.500z" fill="#fff" stroke="#123f6c"/><circle cx="8" cy="6" r="4" fill="#b4cdd7"/><path d="M2 11h3v3H2zM2 2h2v2H2z" fill="#e33"/><path d="M7 11h3v3H7z" fill="#e33"/><path d="M12 11h2v3h-2z" fill="#177ad0"/>',
  tag: '<path d="M2 5l7-2 7 7-6 6-8-8z" fill="#e9d6d6" stroke="#655"/><path d="M6 8l5 5M9 6l5 5" stroke="#d22" stroke-width="2"/><path d="M4 6L1 1" stroke="#222" stroke-width="2"/>',
  platform: '<path d="M1.500 2.500h13v12h-13zM1 7.500h4v-3h5v-2M8 7v-3M1 9h14" fill="#f4faff" stroke="#487fc8"/><path d="M1 9.500h14v5H1z" fill="#fff" stroke="#16436b"/>',
  flight: '<path d="M3 1h10v14H3z" fill="#eafaff" stroke="#167095"/><path d="M3 4.500h10M3 8h10M3 11.500h10" stroke="#167095"/>',
  spiral: '<path d="M1 2l5-1q8 3 9 13l-5 1q0-6-9-9zM4 7l6-5M7 9l6-3M9 12l6-2M1 6l5-5" fill="#dde4ee" stroke="#576983"/>',
  rail: '<path d="M1 8q3-6 14-6M1 8v7M4 5v10M6 4v9M10 3v6M14 2v6" fill="none" stroke="#3c6286" stroke-width="1.500"/>',
  hand: '<path d="M0 4h4v9H0z" fill="#000"/><path d="M2 5h2v6H2z" fill="#35d1d4"/><path d="M4 5l4-1 7 2v2h-5l1 3-2 2H5z" fill="#fff06b" stroke="#111"/><path d="M7 9h4M6 11h4" stroke="#111"/>',
  add: '<path d="M4 0v9M0 4.500h9" stroke="#9a7a00" stroke-width="3"/><path d="M4 1v7M1 4.500h7" stroke="#ffe14d" stroke-width="1.500"/>' + miniTable,
  copy: '<path d="M.500 1.500h8v5h-8z" fill="#fff" stroke="#4775b5"/><path d="M0 1h9v2H0z" fill="#5590dd"/><path d="M8 3q3-3 6 2M12 5h3V2" stroke="#222" fill="none"/>' + miniTable,
  remove: '<path d="M0 0l7 7M7 0L0 7" stroke="#c4121f" stroke-width="2"/>' + miniTable,
  rename: '<path d="M1 4h10v8H1z" fill="#fff" stroke="#4a4a4a"/><path d="M3 6h6v4H3z" fill="#14f"/><path d="M9 1h6M12 1v14M9 15h6" stroke="#666" stroke-width="2"/>',
  copyFloor: '<path d="M5 1h10l-4 4H1zM4 6h10l-4 4H1z" fill="#66bb51" stroke="#377b28" stroke-width=".6"/><path d="M5 11h9l-4 4H0z" fill="#f0c83b" stroke="#a07c16" stroke-width=".6"/><path d="M1 5h9l4 1H5z" fill="#cdeac0"/>',
  record: '<path d="M1.500 4.500h11v10h-11z" fill="#fff" stroke="#9c601a"/><path d="M4 6v8M8 6v8M2 9h10" stroke="#c88"/>' + hand,
  ok: '<circle cx="8" cy="8" r="7.500" fill="#3f9a1f"/><ellipse cx="8" cy="5" rx="6" ry="4" fill="#8fd56b"/><path d="M4 8l3 3 5-6" stroke="#fff" stroke-width="2.500" fill="none"/>',
  pages: '<path d="M.500.500h10v10H.500zM3 3h10v10H3z" fill="#edf6ff" stroke="#6aa0cf"/><path d="M5.500 5.500h10v10h-10z" fill="#fff" stroke="#6aa0cf"/><path d="M8 10.500h5" stroke="#e09420" stroke-width="2"/>',
  swap: '<path d="M1 5l5-4v2h8v3H6v3z" fill="#33a63d"/><path d="M15 11l-5-4v2H3v3h7v3z" fill="#187e2b"/>',
  petals: '<circle cx="8" cy="3.500" r="3" fill="#73bd32"/><circle cx="12.500" cy="8" r="3" fill="#e8793e"/><circle cx="8" cy="12.500" r="3" fill="#f06c91"/><circle cx="3.500" cy="8" r="3" fill="#3f8bdc"/>',
  calculator: '<path d="M1 1h14v14H1z" fill="#dce9f8" stroke="#33618f"/><path d="M2 2h12v4H2z" fill="#39689b"/><path d="M3 8.500h10M3 11h10M3 13.500h10" stroke="#39689b" stroke-dasharray="2 1" stroke-width="1.500"/>',
  printer: '<path d="M4 1h8v6H4z" fill="#6fae4e" stroke="#3b6fb6"/><path d="M8 1h4v3H8z" fill="#4277c6"/><path d="M1 7h14v4H1z" fill="#f3a22f"/><path d="M2 11h12v4H2z" fill="#fff" stroke="#d98414"/>',
  selection: '<path d="M1.500 1.500h14M1.500 1.500v14" stroke="#d22" stroke-dasharray="2 1"/><path d="M4 5.500h12M5.500 4v12M8.500 8.500h8v7h-8z" stroke="#456d9c" fill="none" stroke-width="1.500"/>',
};

const Icon = (props) => h('svg', { viewBox: '0 0 16 16', class: 'icon', 'aria-hidden': 'true', innerHTML: icons[props.name] });
Icon.props = ['name'];

const quickIcons = ['newFile', 'open', 'save', 'saveEdit', 'folderTable', 'ruler'];
const topTools = [
  ['clover'], '|', ['level'], ['binoculars'], ['filter'], ['star'], '|', ['windows'], ['grid4'], '|', ['brush'], '|',
  ['keyboard'], ['net', '刷新'], '|', ['tv', '视图'], '|', ['penguin', '服务'], ['people', '教学'], '|',
  ['option', '选项'], '|', ['contact', '联系我们'], '|', ['notebook', '记事本'], '|',
];
const projectTools = [['layers', '复制'], ['people', '拼接'], ['props', '属性']];
const sumTools = [['report', '报表'], ['teapot', '查量'], ['glasses', '查筋']];
const placeTools = [['placePoint', '单点布置'], ['placeRotate', '旋转布置'], ['placeCoord', '坐标布置']];
const editTools = [
  [['slope', '斜'], ['heightTool', '高'], ['pencil', '筋']],
  [['raise', '升'], ['contact', '私'], ['align', '齐']],
];
const baseTools = [['one', '校基点'], ['two', '工作区'], ['tableIcon', '识表格']];
const viewTools = ['square', 'wireCube', 'building', 'cube'];
const zoomTools = ['pan', 'zoomIn', 'orbit', 'zoomFit'];
const modifyTools = ['cross', 'copyRing', 'mirror', 'move', 'rotate'];
const cadTools = [
  [['measure', '测量'], ['dimension', '标注'], ['axis', '辅助']],
  [['chat', '查询'], ['colour', '颜色'], ['blocks', '显示']],
  [['cadPaper', 'CAD图纸'], ['layers', 'CAD图层'], ['cadEdit', 'CAD编辑']],
];
const dialogTools = [['remove', '删除'], ['copyFloor', '属性楼层复制'], ['net', '批量自动套'], ['record', '属性表格录入'], ['ok', '关闭']];
const switches = ['轴号', '正交', '动态', '图纸', '捕捉', '分层', '提示', '编号'];

const navTree = [
  ['home', '已用构件'], ['axisNet', '轴网'], ['bim', 'BIM应用'], ['wall', '墙'], ['column', '柱'], ['beam', '梁'],
  ['plate', '板'], ['stair', '楼梯'], ['net', '装配式'], ['hollow', '空心楼盖'], ['windowFrame', '门窗洞'], ['home', '装饰'],
  ['base', '基础'], ['cantilever', '零星悬挑'], ['pixels', '零星构件'], ['tag', '扩展构件'],
];

const listTree = [
  { cells: ['exp first'], icon: 'stair', text: '楼梯平面' },
  { cells: ['line', 'last'], icon: 'stair', text: 'LT1', leaf: true },
  { cells: ['exp'], icon: 'stair', text: '参数楼梯' },
  { cells: ['line', 'last'], icon: 'hand', text: 'LT1', leaf: true, on: true },
  { cells: ['exp'], icon: 'platform', text: '休息平台' },
  { cells: ['line', 'last'], icon: 'platform', text: 'PT1', leaf: true },
  { cells: ['exp'], icon: 'flight', text: '直形梯段' },
  { cells: ['line', 'last'], icon: 'flight', text: 'ZLT1', leaf: true },
  { cells: ['exp'], icon: 'spiral', text: '螺旋梯段' },
  { cells: ['line', 'last'], icon: 'spiral', text: 'HLT1', leaf: true },
  { cells: ['exp last'], icon: 'rail', text: '栏杆' },
  { cells: ['blank', 'last'], icon: 'rail', text: 'LG1', leaf: true },
];

const dialogTree = [
  { cells: ['exp only'], icon: 'stair', text: '楼梯' },
  { cells: ['blank', 'exp'], icon: 'stair', text: '楼梯平面' },
  { cells: ['blank', 'line', 'last'], icon: 'stair', text: 'LT1', leaf: true },
  { cells: ['blank', 'exp'], icon: 'stair', text: '参数楼梯' },
  { cells: ['blank', 'line', 'last'], icon: 'hand', text: 'LT1', leaf: true, on: true },
  { cells: ['blank', 'exp'], icon: 'platform', text: '休息平台', closed: true },
  { cells: ['blank', 'exp'], icon: 'flight', text: '直形梯段' },
  { cells: ['blank', 'line', 'last'], icon: 'flight', text: 'ZLT1', leaf: true },
  { cells: ['blank', 'exp'], icon: 'spiral', text: '螺旋梯段', closed: true },
  { cells: ['blank', 'exp last'], icon: 'rail', text: '栏杆', closed: true },
];

const rows = [
  ['名称编号', 'LT1'], ['参数楼梯类型', '双跑楼梯'], ['工程.底标高(MM)', '层底(-3000)'], ['备注', ''], ['楼梯参数信息', ''],
  ['配筋方式', '配筋方式1'], ['级数1', '6'], ['级数2', '6'], ['梁搁置长度', '200'], ['板搁置长度', '200'], ['扶手距边', '200'],
  ['楼梯扶手高', '900'], ['踢脚高度', '150'], ['楼梯长1', '1200'], ['楼梯长2', '1300'], ['楼梯宽1', '1400'], ['楼梯宽2', '1400'],
  ['休息台', '1080'], ['休息台厚', '100'], ['平台', '1000'], ['板厚', '100'], ['楼梯高1', '900'], ['楼梯高2', '900'], ['楼梯井', '150'],
  ['踏步宽1', '240'], ['踏步高1', '150'], ['踏步宽2', '260'], ['踏步高2', '150'], ['楼梯段1厚', '100'], ['楼梯段2厚', '100'],
];

// reinforcement points of the two flights
const dots = [
  [405, 212], [405, 217], [425, 212], [425, 217], [445, 212], [445, 217], [468, 207], [487, 194], [506, 182], [522, 171],
  [539, 159], [551, 146], [554, 150], [567, 135], [569, 139], [586, 132], [586, 138],
];
const dots2 = [
  [432, 339], [431, 344], [450, 350], [449, 354], [469, 367], [487, 380], [506, 392], [534, 407], [532, 410], [545, 418],
  [567, 418], [567, 422],
];

const notes = [
  [50, 63, '梯段1一楼梯级数(N1):'], [50, 78, '梯段2一楼梯级数(N2):'], [50, 93, '板搁置长度:'], [50, 108, '梁搁置长度:'],
  [210, 63, '楼梯扶手高:'], [210, 78, '扶手距边:'], [210, 93, '踢脚线高度:'],
  [101, 127, '(N2-1)*B2'], [75, 162, 'TL1'], [122, 160, 'H2:'], [40, 182, '梯段2'], [154, 182, 'B2:'],
  [88, 226, 'H1:'], [59, 237, 'B1:'], [165, 222, 'TL2'], [215, 222, 'TL3'], [180, 262, '梯段1'], [96, 287, '(N1-1)*B1'],
  [240, 187, 'N2*H2'], [240, 247, 'N1*H1'], [175, 351, 'TL3'], [175, 376, 'TL2'], [175, 446, 'TL1'],
  [35, 412, 'B1*(N1-1)'], [180, 412, 'B2*(N2-1)'], [109, 455, '上'], [144, 428, '下'],
  [357, 100, '梯段1:'], [357, 267, '梯段2:'], [330, 532, '注:楼梯按水平投影面积计算时不扣除小于'],
];

const sizes = [
  [175, 52, '6'], [175, 67, '6'], [125, 82, '200'], [125, 97, '200'], [280, 52, '900'], [280, 67, '200'], [280, 82, '150'],
  [140, 149, '150'], [175, 172, '260'], [100, 192, '100'], [190, 187, '100'], [109, 216, '150'], [80, 227, '240'],
  [130, 247, '100'], [40, 252, '100'], [90, 317, '1400'], [125, 317, '150'], [155, 317, '1400'], [60, 362, '1080'], [60, 427, '1000'],
  [95, 472, '350'], [170, 472, '350'], [245, 472, '350'], [55, 512, '250'], [130, 512, '250'], [205, 512, '250'],
  [539, 101, '240'], [394, 149, 'C8@200'], [450, 166, '240'], [376, 183, '150'], [341, 215, '150'], [387, 229, '125'],
  [455, 238, 'C8@200'], [540, 208, 'C8@200'], [553, 158, 'C8@200'], [378, 290, '150'], [428, 291, '325'], [364, 321, '150'],
  [384, 367, '125'], [425, 376, 'C8@200'], [439, 411, 'C8@200'], [527, 373, '260'], [515, 447, 'C8@200'], [564, 463, 'a6@200'],
  [550, 522, '500'],
];
</script>

<style>
body {
  overflow: hidden;
}
</style>

<style scoped>
.app {
  position: relative;
  display: flex;
  flex-direction: column;
  height: 100vh;
  overflow: hidden;
  background: #bfdbff;
  color: #000;
  font: 12px/16px "Liberation Sans", "Noto Sans CJK SC", sans-serif;
}

.app * {
  box-sizing: border-box;
}

button,
input,
select {
  font: inherit;
  color: inherit;
}

.bare {
  display: flex;
  align-items: center;
  margin: 0;
  padding: 0;
  border: 0;
  background: none;
  white-space: nowrap;
}

.icon {
  flex: none;
  width: 16px;
  height: 16px;
}

.tool {
  gap: 3px;
}

.caret {
  flex: none;
  width: 0;
  border: 3px solid transparent;
  border-top: 4px solid #5c83ba;
  border-bottom: 0;
}

.caret.grey {
  border-top-color: #777;
}

.divider {
  flex: none;
  width: 1px;
  height: 13px;
  background: #7ba7dc;
}

/* title bar */
.titlebar {
  display: flex;
  flex: none;
  align-items: flex-start;
  height: 18px;
  background: #fff;
}

.quick {
  display: flex;
  flex: none;
  align-items: center;
  gap: 5px;
  width: 216px;
  height: 16px;
  margin-left: 47px;
  padding: 0 0 8px 6px;
  border: 1px solid #c5c8ce;
  border-top: 0;
  border-radius: 0 0 14px 4px;
  background: #f1f2f4;
}

.quick .split {
  margin-left: 2px;
  padding-left: 3px;
  border-left: 1px solid #9fb4cf;
}

.more {
  flex: none;
  width: 7px;
  height: 8px;
  margin: 6px 0 0 8px;
  border-top: 1px solid #15428b;
}

.more::after {
  content: "";
  display: block;
  margin-top: 2px;
  border: 3px solid transparent;
  border-top: 4px solid #15428b;
  border-bottom: 0;
}

h1 {
  flex: 1;
  margin: -3px 0 0;
  padding-left: 32px;
  font: 12px/18px "Noto Sans", "Noto Sans CJK SC", sans-serif;
  text-align: center;
  white-space: nowrap;
}

.window-buttons {
  display: flex;
  gap: 30px;
  padding-right: 17px;
  color: #999;
}

.orb {
  position: absolute;
  top: -1px;
  left: 3px;
  width: 39px;
  height: 39px;
}

.orb svg {
  width: 39px;
  height: 39px;
}

.tabrow {
  display: flex;
  flex: none;
  align-items: flex-end;
  justify-content: space-between;
  height: 25px;
  padding-left: 45px;
  color: #15428b;
}

.ribbon-tab {
  justify-content: center;
  width: 154px;
  height: 24px;
  border: 1px solid #8db2e3;
  border-bottom: 0;
  border-radius: 3px 3px 0 0;
  background: linear-gradient(#fff, #dbe8f8);
}

.tools {
  display: flex;
  align-items: center;
  gap: 6px;
  width: calc(100% - 521px);
  height: 23px;
  padding-left: 21px;
  background: linear-gradient(#e6f1ff, #b1d2ff);
}

.tools .divider {
  margin-right: 1px;
}

.tools .labelled {
  margin-right: 3px;
}

/* ribbon */
.ribbon {
  display: flex;
  flex: none;
  gap: 4px;
  height: 74px;
  padding: 1px 1px 6px;
  border-bottom: 3px solid #93b5df;
  background: linear-gradient(#dce7f5, #cad9ec 25%, #d2e0f0 55%, #e5f8ff);
  color: #15428b;
}

.group {
  display: flex;
  flex: none;
  height: 67px;
  border: 1px solid #a4bfdf;
  border-radius: 3px;
  background: linear-gradient(#dbe7f5, #c9daee 25%, #cfdff1 75%, #bdd7f1 80%, #cce3f8);
}

.big {
  flex-direction: column;
  justify-content: flex-start;
  padding-top: 4px;
}

.big .large {
  width: 32px;
  height: 32px;
}

.big .caret {
  margin-top: 2px;
}

.column {
  display: flex;
  flex-direction: column;
  gap: 6px;
  padding-top: 4px;
}

.g-project {
  gap: 6px;
  width: 110px;
  padding-left: 4px;
}

.g-place {
  gap: 9px;
  width: 268px;
  padding-left: 6px;
}

.g-edit {
  gap: 6px;
  padding: 0 6px 0 7px;
}

.g-base {
  padding: 0 5px 0 7px;
}

.g-view {
  padding: 0 4px 0 3px;
}

.g-check {
  padding: 0 6px 0 4px;
}

.g-cad {
  gap: 7px;
  padding: 0 1px 0 4px;
}

.boxes {
  display: flex;
  flex-direction: column;
  align-items: flex-start;
  gap: 7px;
  padding-top: 9px;
}

.box {
  display: flex;
  gap: 5px;
  height: 22px;
  padding: 0 1px;
  border: 1px solid #8db0de;
  border-radius: 2px;
  background: #cbdcf0;
}

.box.wide {
  gap: 7px;
  padding: 0 2px;
}

.box.narrow {
  gap: 4px;
}

.box .on {
  outline: 2px solid #e9ae4d;
  outline-offset: -1px;
  background: #ffe6a8;
}

/* work area */
.workspace {
  display: flex;
  flex: 1;
  min-height: 0;
}

.nav-panel {
  display: flex;
  flex: none;
  flex-direction: column;
  width: 168px;
  padding-top: 1px;
}

.panel-title {
  display: flex;
  flex: none;
  align-items: center;
  justify-content: space-between;
  height: 17px;
  padding-right: 1px;
  background: #b7cfe9;
  color: #1e5597;
}

.panel-tabs {
  display: flex;
  flex: none;
  align-items: flex-end;
  gap: 2px;
  height: 16px;
  padding-left: 2px;
  background: linear-gradient(#c5ddff, #e4efff);
  color: #15428b;
}

.panel-tabs button {
  height: 16px;
  padding: 0 5px;
  border-top: 1px solid #b6d0f0;
  border-right: 1px solid #b6d0f0;
  border-radius: 5px 8px 0 0;
  background: #d6e6fb;
}

.panel-tabs .active {
  padding-left: 6px;
  background: #fff;
  color: #000;
}

.floor {
  display: flex;
  flex: none;
  align-items: center;
  gap: 5px;
  height: 29px;
  padding: 5px 5px 1px 2px;
  border-bottom: 1px solid #999;
  background: #f0f0f0;
}

.combo {
  display: flex;
  align-items: center;
  height: 21px;
  border: 1px solid #808080;
  background: #fff;
}

.floor .combo {
  flex: 1;
  padding-left: 4px;
}

.combo select {
  flex: 1;
  min-width: 0;
  padding: 0 0 0 4px;
  border: 0;
  background: none;
  appearance: none;
}

.tree {
  margin: 0;
  padding: 0;
  background: #fff;
  list-style: none;
}

.tree li {
  display: flex;
  height: 16px;
}

.cell {
  position: relative;
  flex: none;
  width: 19px;
}

.cell::before {
  content: "";
  position: absolute;
  top: 0;
  bottom: 0;
  left: 9px;
  border-left: 1px dotted #808080;
}

.cell::after {
  content: "";
  position: absolute;
  top: 8px;
  right: 0;
  left: 10px;
  border-top: 1px dotted #808080;
}

.cell.first::before {
  top: 8px;
}

.cell.last::before {
  bottom: 7px;
}

.cell.line::after,
.cell.blank::after,
.cell.blank::before,
.cell.only::before {
  display: none;
}

.expander {
  position: absolute;
  z-index: 1;
  top: 4px;
  left: 5px;
  width: 9px;
  height: 9px;
  padding: 0;
  border: 1px solid #919191;
  background: #fff;
  color: #1a3f9c;
  font-size: 10px;
  line-height: 7px;
}

.label {
  margin-left: 3px;
  padding: 0 2px;
  white-space: nowrap;
}

.leaf {
  color: red;
}

.selected {
  background: #0078d7;
  color: #fff;
}

.leaf.selected {
  color: red;
}

.focus {
  outline: 1px dotted #b04020;
  outline-offset: -1px;
}

.nav-tree {
  flex: 1;
  padding: 1px 0 0 1px;
  overflow: hidden;
}

.nav-foot {
  display: flex;
  flex: none;
  height: 25px;
  border-top: 1px solid #888;
  background: linear-gradient(#e3efff, #b5d3fd);
  color: #102c6b;
}

.nav-foot button {
  padding: 0 7px;
  border-right: 1px solid #7e9fc8;
}

.nav-foot button:first-child {
  padding: 0 6px 0 3px;
}

.nav-foot button:last-child {
  border-right: 0;
}

.splitter {
  flex: none;
  width: 6px;
  padding: 292px 1px 0;
}

.splitter i {
  display: block;
  height: 69px;
  background: #7cc4ee;
}

.prop-panel {
  display: flex;
  flex: none;
  flex-direction: column;
  width: 237px;
  padding-top: 1px;
}

.prop-panel .panel-title {
  padding: 0 1px 0 3px;
}

.prop-panel .panel-title.sub {
  height: 18px;
}

.prop-tools {
  display: flex;
  flex: none;
  align-items: center;
  gap: 6px;
  height: 22px;
  padding-left: 8px;
  background: linear-gradient(#d7e6fb, #b9d5fb);
}

.prop-tools input {
  width: 54px;
  height: 15px;
  padding: 0;
  border: 0;
  background: #fff;
}

.list-tree {
  flex: none;
  height: 318px;
  padding: 2px 0 0 3px;
  border: 1px solid #808080;
}

.h-splitter {
  flex: none;
  height: 6px;
  padding: 1px 0 0 47px;
}

.h-splitter i {
  display: block;
  width: 69px;
  height: 4px;
  background: #7cc4ee;
}

.small-grid {
  flex: 1;
  padding: 1px 0 0 1px;
  overflow: hidden;
  border: 1px solid #808080;
  background: #fff;
}

table {
  table-layout: fixed;
  border-collapse: separate;
  border-spacing: 0;
}

th,
td {
  padding: 0;
  overflow: hidden;
  font-weight: normal;
  text-align: left;
  white-space: nowrap;
}

th {
  background: #f0f0f0;
}

.small-grid table {
  width: 234px;
}

.small-grid th:first-child {
  width: 79px;
}

.small-grid th,
.small-grid td {
  height: 18px;
  padding-left: 4px;
  border-bottom: 1px solid #c0c0c0;
  line-height: 17px;
}

.small-grid th {
  height: 20px;
}

.small-grid tr > :first-child {
  border-right: 1px solid #666;
  border-bottom-color: #666;
}

.small-grid td:first-child,
.grid td:first-child {
  color: #3d82f0;
}

.small-grid .section td,
.small-grid .own td:first-child,
.grid .section td:nth-child(-n + 2) {
  background: #f7faaf;
  color: #000;
}

.small-grid .section td:first-child {
  padding-left: 2px;
}

.small-grid .own td:first-child {
  color: #3d82f0;
}

.small-grid td input {
  display: block;
  width: 140px;
  height: 14px;
  margin-left: 3px;
  border: 1px solid #696969;
}

.toggle {
  width: 11px;
  height: 11px;
  margin: 0 6px 0 0;
  padding: 0;
  border: 1px solid #0000b4;
  background: #fff;
  color: #0000b4;
  line-height: 9px;
  vertical-align: -1px;
}

.preview {
  flex: none;
  height: 88px;
  margin-top: 4px;
  padding: 8px;
  border: 1px solid #808080;
  background: #000;
  color: #0f0;
  font: 40px/56px "Noto Sans CJK SC", sans-serif;
  font-weight: 300;
}

.preview span {
  display: block;
}

.preview i {
  display: block;
  width: 219px;
  height: 2px;
  margin-top: 2px;
  background: red;
}

.viewport {
  flex: 1;
  margin: 0 0 4px 4px;
  border-left: 1px solid #555;
  background: #000;
}

/* status bar */
.status {
  display: flex;
  flex: none;
  height: 17px;
  border-top: 1px solid #3c5d95;
  background: linear-gradient(#eaf3ff, #b5d1f7 45%, #d7e8fd);
  color: #0c2a70;
  white-space: nowrap;
}

.status > * {
  flex: none;
  height: 16px;
  overflow: hidden;
  border-right: 1px solid #86aade;
}

.status .hint {
  flex: 1;
}

.status .level {
  width: 206px;
  padding-left: 3px;
}

.status .coords {
  width: 126px;
  padding-left: 4px;
}

.status button {
  justify-content: center;
  width: 31px;
}

.status .pic {
  width: 22px;
}

.status .pic:last-child {
  width: 19px;
}

.dark {
  color: #000;
}

.off {
  color: #aab0ba;
}

.float-logo {
  position: absolute;
  top: 140px;
  right: 0;
  width: 40px;
  height: 48px;
  overflow: hidden;
  border-radius: 4px 0 0 4px;
  background: linear-gradient(#fff, #e0f4ff);
}

/* property dialog */
.dialog {
  position: absolute;
  top: 148px;
  right: 69px;
  bottom: 42px;
  left: 316px;
  display: flex;
  flex-direction: column;
  background: #f0f0f0;
}

.dialog-title {
  display: flex;
  flex: none;
  align-items: center;
  gap: 30px;
  height: 30px;
  padding: 0 15px 2px 8px;
  background: #fff;
}

.dialog-logo {
  flex: none;
  width: 16px;
  height: 16px;
}

.dialog-title h2 {
  flex: 1;
  margin: 0 0 0 -25px;
  font-size: 12px;
  font-weight: normal;
}

.dialog-title .faint {
  color: #bbb;
}

.dialog-tools {
  display: flex;
  flex: none;
  align-items: center;
  gap: 7px;
  height: 26px;
  padding: 0 0 2px 8px;
  color: #0c2a70;
}

.dialog-tools .combo {
  width: 73px;
  padding-left: 4px;
  color: #000;
}

.dialog-tools .divider {
  width: 1px;
  height: 20px;
  background: #a0a0a0;
}

.dialog-tools .combo + .divider {
  margin: 0 1px 0 -2px;
}

.dialog-tools .tool + .divider {
  margin-left: 3px;
}

.dialog-body {
  display: flex;
  flex: 1;
  min-height: 0;
  padding-left: 3px;
}

.dialog-tree {
  flex: none;
  width: 192px;
  padding: 2px 0 0 3px;
  border: 1px solid #808080;
  border-bottom: 0;
}

.editor {
  display: flex;
  flex: 1;
  flex-direction: column;
  min-width: 0;
  padding-left: 4px;
}

.editor-tabs {
  display: flex;
  flex: none;
  align-items: flex-end;
  height: 22px;
}

.editor-tabs button {
  width: 56px;
  height: 19px;
  padding: 0;
  border: 1px solid #d5d5d5;
  border-width: 1px 1px 0 0;
  background: #f0f0f0;
}

.editor-tabs .active {
  width: 63px;
  height: 22px;
  padding-bottom: 3px;
  background: #fff;
}

.editor-main {
  display: flex;
  flex: 1;
  min-height: 0;
  gap: 4px;
  padding-left: 3px;
}

.grid-wrap {
  display: flex;
  flex: none;
  width: 262px;
  border: 1px solid #808080;
  border-right-color: #ddd;
  border-bottom-color: #ddd;
  background: #fff;
}

.grid-clip {
  flex: 1;
  padding: 1px 0 0 1px;
  overflow: hidden;
}

.grid {
  width: 239px;
}

.grid th {
  height: 21px;
  padding-left: 4px;
  border-right: 1px solid #666;
  border-bottom: 1px solid #666;
}

.grid th:nth-child(1) {
  width: 104px;
}

.grid th:nth-child(2) {
  width: 100px;
}

.grid td {
  height: 17px;
  padding-left: 4px;
  border-right: 1px solid #c0c0c0;
  border-bottom: 1px solid #c0c0c0;
  line-height: 16px;
}

.grid td:first-child {
  position: relative;
  border-right-color: #666;
  border-bottom-color: #666;
}

.grid td:last-child {
  padding: 0 0 0 10px;
}

.grid .section td:first-child {
  padding-left: 2px;
}

.grid .child td:first-child {
  padding-left: 20px;
}

.grid .child td:first-child::before {
  content: "";
  position: absolute;
  top: 0;
  left: 8px;
  height: 17px;
  border-left: 1px solid #0000b4;
}

.grid .child td:first-child::after {
  content: "";
  position: absolute;
  top: 8px;
  left: 8px;
  width: 12px;
  border-top: 1px solid #0000b4;
}

.grid input {
  display: block;
  position: relative;
  width: 13px;
  height: 13px;
  margin: 0;
  border: 1px solid #1c5180;
  background: linear-gradient(135deg, #dcdcd7, #fff);
  appearance: none;
}

.grid input:checked::after {
  content: "";
  position: absolute;
  top: 0;
  left: 4px;
  width: 4px;
  height: 8px;
  border: solid #21a121;
  border-width: 0 2px 2px 0;
  transform: rotate(40deg);
}

.scrollbar {
  display: flex;
  flex: none;
  flex-direction: column;
  width: 17px;
  margin-right: 2px;
  background: #f0f0f0;
}

.scrollbar i {
  width: 15px;
  height: 166px;
  margin: 1px 1px auto;
  background: #cdcdcd;
}

.drawing {
  position: relative;
  flex: 1;
  min-width: 0;
  margin-right: 1px;
  overflow: hidden;
  border-top: 1px solid #999;
  background: #000;
}

.sheet {
  position: absolute;
  inset: 0;
  shape-rendering: crispEdges;
}

.sheet circle {
  shape-rendering: auto;
}

.grey,
.cyan,
.magenta,
.rebar {
  fill: none;
  stroke: #c0c0c0;
}

.cyan {
  stroke: #0ff;
}

.magenta {
  stroke: #f0f;
}

.rebar {
  stroke: #ff0;
  stroke-width: 2px;
}

.heading,
.note {
  fill: #0f0;
}

.heading {
  font-size: 17px;
  font-weight: bold;
}

.size {
  font: 11px "Liberation Mono", monospace;
}

.view-switch {
  position: absolute;
  top: 0;
  right: 0;
  display: flex;
  flex-wrap: wrap;
  gap: 1px;
  width: 67px;
  height: 34px;
  padding: 1px;
  overflow: hidden;
  background: #c0c0c0;
}

.view-switch button {
  width: 31px;
  height: 17px;
  padding: 0;
  border: 1px solid #000;
  background: #c0c0c0;
  line-height: 14px;
}

.view-switch span {
  padding-left: 10px;
  white-space: nowrap;
}

.popup {
  position: absolute;
  top: 21px;
  right: 0;
  width: 16px;
  height: 18px;
  padding-left: 3px;
  overflow: hidden;
  background: #fff;
}

fieldset {
  flex: none;
  height: 58px;
  margin: 5px 1px 1px 0;
  padding: 0 5px 0 6px;
  border: 1px solid #dcdcdc;
}

legend {
  height: 12px;
  padding: 0 2px;
  line-height: 12px;
}

fieldset p {
  margin: 0;
  line-height: 12px;
  white-space: nowrap;
}

fieldset legend + p {
  margin-top: 4px;
}
</style>
